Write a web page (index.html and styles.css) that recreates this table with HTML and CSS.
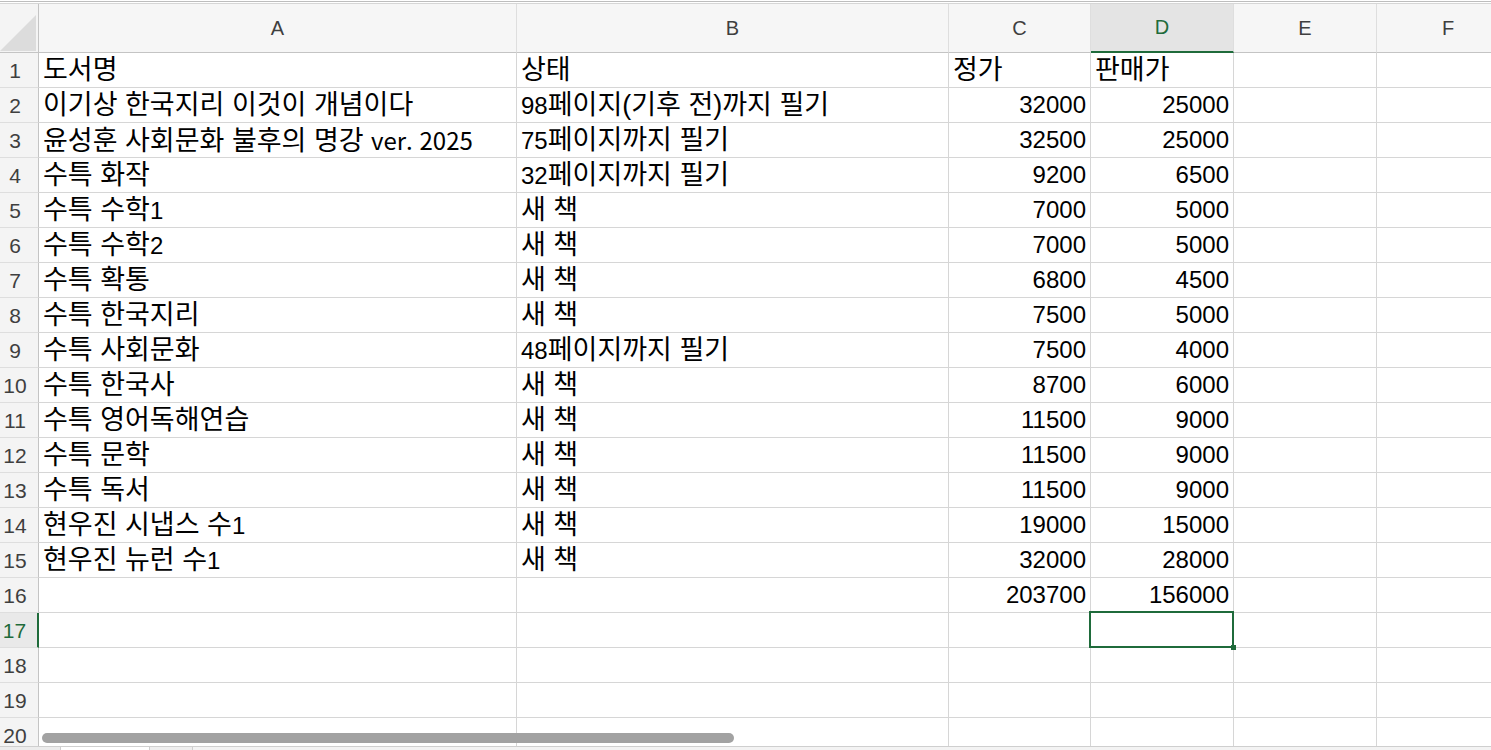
FILE: index.html
```html
<!DOCTYPE html>
<html lang="ko">
<head>
<meta charset="utf-8">
<title>도서 목록</title>
<link rel="stylesheet" href="styles.css">
</head>
<body>
<div class="app">
  <div class="topbar"></div>
  <div class="viewport">
    <div class="sheet">
      <div class="corner"></div>
      <div class="ch">A</div><div class="ch">B</div><div class="ch">C</div><div class="ch sel-col">D</div><div class="ch">E</div><div class="ch">F</div>

      <div class="rh">1</div><div class="c">도서명</div><div class="c">상태</div><div class="c">정가</div><div class="c">판매가</div><div class="c"></div><div class="c"></div>
      <div class="rh">2</div><div class="c">이기상 한국지리 이것이 개념이다</div><div class="c"><span class="d">98</span>페이지(기후 전)까지 필기</div><div class="c n">32000</div><div class="c n">25000</div><div class="c"></div><div class="c"></div>
      <div class="rh">3</div><div class="c">윤성훈 사회문화 불후의 명강 <span class="lat">ver. 2025</span></div><div class="c"><span class="d">75</span>페이지까지 필기</div><div class="c n">32500</div><div class="c n">25000</div><div class="c"></div><div class="c"></div>
      <div class="rh">4</div><div class="c">수특 화작</div><div class="c"><span class="d">32</span>페이지까지 필기</div><div class="c n">9200</div><div class="c n">6500</div><div class="c"></div><div class="c"></div>
      <div class="rh">5</div><div class="c">수특 수학<span class="d">1</span></div><div class="c">새 책</div><div class="c n">7000</div><div class="c n">5000</div><div class="c"></div><div class="c"></div>
      <div class="rh">6</div><div class="c">수특 수학<span class="d">2</span></div><div class="c">새 책</div><div class="c n">7000</div><div class="c n">5000</div><div class="c"></div><div class="c"></div>
      <div class="rh">7</div><div class="c">수특 확통</div><div class="c">새 책</div><div class="c n">6800</div><div class="c n">4500</div><div class="c"></div><div class="c"></div>
      <div class="rh">8</div><div class="c">수특 한국지리</div><div class="c">새 책</div><div class="c n">7500</div><div class="c n">5000</div><div class="c"></div><div class="c"></div>
      <div class="rh">9</div><div class="c">수특 사회문화</div><div class="c"><span class="d">48</span>페이지까지 필기</div><div class="c n">7500</div><div class="c n">4000</div><div class="c"></div><div class="c"></div>
      <div class="rh">10</div><div class="c">수특 한국사</div><div class="c">새 책</div><div class="c n">8700</div><div class="c n">6000</div><div class="c"></div><div class="c"></div>
      <div class="rh">11</div><div class="c">수특 영어독해연습</div><div class="c">새 책</div><div class="c n">11500</div><div class="c n">9000</div><div class="c"></div><div class="c"></div>
      <div class="rh">12</div><div class="c">수특 문학</div><div class="c">새 책</div><div class="c n">11500</div><div class="c n">9000</div><div class="c"></div><div class="c"></div>
      <div class="rh">13</div><div class="c">수특 독서</div><div class="c">새 책</div><div class="c n">11500</div><div class="c n">9000</div><div class="c"></div><div class="c"></div>
      <div class="rh">14</div><div class="c">현우진 시냅스 수<span class="d">1</span></div><div class="c">새 책</div><div class="c n">19000</div><div class="c n">15000</div><div class="c"></div><div class="c"></div>
      <div class="rh">15</div><div class="c">현우진 뉴런 수<span class="d">1</span></div><div class="c">새 책</div><div class="c n">32000</div><div class="c n">28000</div><div class="c"></div><div class="c"></div>
      <div class="rh">16</div><div class="c"></div><div class="c"></div><div class="c n">203700</div><div class="c n">156000</div><div class="c"></div><div class="c"></div>
      <div class="rh sel-row">17</div><div class="c"></div><div class="c"></div><div class="c"></div><div class="c active"></div><div class="c"></div><div class="c"></div>
      <div class="rh">18</div><div class="c"></div><div class="c"></div><div class="c"></div><div class="c"></div><div class="c"></div><div class="c"></div>
      <div class="rh">19</div><div class="c"></div><div class="c"></div><div class="c"></div><div class="c"></div><div class="c"></div><div class="c"></div>
      <div class="rh">20</div><div class="c"></div><div class="c"></div><div class="c"></div><div class="c"></div><div class="c"></div><div class="c"></div>
    </div>
    <div class="hscroll"></div>
  </div>
  <div class="tabs">
    <div class="tab-gap"></div>
    <div class="tab"></div>
    <div class="tab-mid"></div>
    <div class="tab-rest"></div>
  </div>
</div>
</body>
</html>
```

FILE: styles.css
```css
html, body {
  margin: 0;
  padding: 0;
  background: #ffffff;
}

.app {
  width: 1491px;
  height: 750px;
  display: flex;
  flex-direction: column;
  overflow: hidden;
}

.topbar {
  height: 4px;
  flex: none;
  background: linear-gradient(to bottom, #ffffff 0 1px, #bdbdbd 1px 2px, #ffffff 2px 3px, #d6d6d6 3px 4px);
}

.viewport {
  flex: 1;
  position: relative;
  overflow: hidden;
}

.sheet {
  display: grid;
  grid-template-columns: 39px 478px 432px 142px 143px 143px 143px;
  grid-template-rows: 49px;
  grid-auto-rows: 35px;
  font-family: "Liberation Sans", "Noto Sans CJK KR", sans-serif;
}

.sheet > div {
  box-sizing: border-box;
  border-right: 1px solid #d6d6d6;
  border-bottom: 1px solid #d6d6d6;
  white-space: nowrap;
  overflow: visible;
}

.corner {
  position: relative;
  background: #f4f4f4;
  border-right: 1px solid #c4c4c4 !important;
  border-bottom: 1px solid #c4c4c4 !important;
}

.corner::after {
  content: "";
  position: absolute;
  left: 0;
  top: 11px;
  width: 36px;
  height: 36px;
  background: #dcdcdc;
  clip-path: polygon(100% 0, 100% 100%, 0 100%);
}

.ch {
  background: #f6f6f6;
  color: #3f3f3f;
  font-size: 20px;
  text-align: center;
  line-height: 48px;
  border-bottom: 1px solid #c4c4c4 !important;
  border-right-color: #dedede !important;
}

.ch.sel-col {
  background: #e4e4e4;
  color: #1f6b3b;
  border-bottom: 2px solid #1f6b3b !important;
  line-height: 46px;
}

.rh {
  background: #f4f4f4;
  color: #3f3f3f;
  font-size: 21px;
  line-height: 35px;
  padding-right: 8px;
  text-align: center;
  border-right: 1px solid #c4c4c4 !important;
  border-bottom-color: #dedede !important;
}

.rh.sel-row {
  background: #e9e9e9;
  color: #1f6b3b;
  border-right: 2px solid #1f6b3b !important;
}

.c {
  font-size: 27px;
  line-height: 34px;
  color: #000000;
  padding: 0 4px;
  position: relative;
}

.c.n {
  font-size: 24px;
  text-align: right;
}

.c .d {
  font-size: 24px;
}

.c .lat {
  font-family: "Noto Sans CJK KR", sans-serif;
  font-size: 24px;
}

.c.active::after {
  content: "";
  position: absolute;
  left: -2px;
  top: -2px;
  right: -1px;
  bottom: -1px;
  border: 2px solid #1f6b3b;
}

.c.active::before {
  content: "";
  position: absolute;
  right: -3px;
  bottom: -3px;
  width: 5px;
  height: 5px;
  background: #1f6b3b;
  z-index: 2;
}

.hscroll {
  position: absolute;
  left: 42px;
  top: 729px;
  width: 692px;
  height: 10px;
  border-radius: 5px;
  background: #a2a2a2;
}

.tabs {
  flex: none;
  height: 4px;
  display: flex;
  background: #e6e6e6;
  border-top: 1px solid #cfcfcf;
  box-sizing: border-box;
}

.tab-gap {
  width: 60px;
  background: #ececec;
}

.tab {
  width: 88px;
  background: #ffffff;
  border-left: 1px solid #cfcfcf;
  border-right: 1px solid #cfcfcf;
}

.tab-mid {
  width: 42px;
  background: #eeeeee;
  border-right: 1px solid #cfcfcf;
}

.tab-rest {
  flex: 1;
  background: #f3f3f3;
}
```
